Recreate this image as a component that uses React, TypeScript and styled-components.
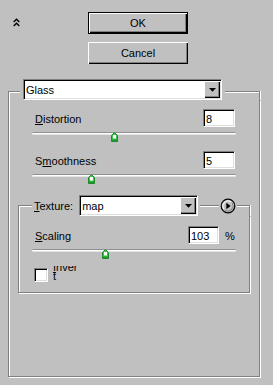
import React from "react";
import styled, { createGlobalStyle, css } from "styled-components";

const GlobalStyle = createGlobalStyle`
  *, *::before, *::after {
    box-sizing: border-box;
  }

  html,
  body {
    margin: 0;
    padding: 0;
    background: #c0c0c0;
  }

  body {
    font-family: "Liberation Sans", Arial, sans-serif;
    font-size: 11px;
    color: #000;
  }
`;

const sunken = css`
  border: 1px solid;
  border-color: #808080 #ffffff #ffffff #808080;
  box-shadow: inset 1px 1px 0 #000, inset -1px -1px 0 #dfdfdf;
  background: #fff;
`;

const raised = css`
  background: #c0c0c0;
  box-shadow: inset 1px 1px 0 #fff, inset -1px -1px 0 #000,
    inset -2px -2px 0 #808080;
`;

const Page = styled.div`
  width: 273px;
  height: 385px;
  padding: 12px 0 0 8px;
`;

const TopBar = styled.div`
  display: grid;
  grid-template-columns: 80px 100px;
  align-items: start;
`;

const CollapseToggle = styled.button`
  appearance: none;
  border: 0;
  background: transparent;
  padding: 0;
  margin: 3px 0 0 5px;
  width: 8px;
  height: 9px;
  display: block;
`;

const ButtonStack = styled.div`
  display: flex;
  flex-direction: column;
  gap: 8px;
`;

const DialogButton = styled.button<{ $primary?: boolean }>`
  appearance: none;
  width: 100px;
  height: 22px;
  padding: 0;
  font: inherit;
  color: #000;
  ${raised};

  ${({ $primary }) =>
    $primary
      ? css`
          border: 1px solid #000;
        `
      : css`
          border: 0;
        `};
`;

/* group box: a head row holding the etched line plus its legend, then a body */
const Group = styled.section<{ $top: number; $width?: number }>`
  margin-top: ${({ $top }) => $top}px;
  width: ${({ $width }) => ($width ? `${$width}px` : "auto")};
`;

const GroupHead = styled.div<{ $height: number }>`
  display: flex;
  height: ${({ $height }) => $height}px;
`;

const Edge = styled.div<{ $line: number; $width?: number; $side?: "left" | "right" }>`
  margin-top: ${({ $line }) => $line}px;
  border-top: 1px solid #808080;

  ${({ $width }) =>
    $width
      ? css`
          width: ${$width}px;
          flex: none;
        `
      : css`
          flex: 1;
        `};

  ${({ $side }) =>
    $side === "left"
      ? css`
          border-left: 1px solid #808080;
          box-shadow: inset 1px 1px 0 #fff;
        `
      : $side === "right"
      ? css`
          border-right: 1px solid #808080;
          box-shadow: inset 0 1px 0 #fff, 1px 0 0 #fff;
        `
      : css`
          box-shadow: inset 0 1px 0 #fff;
        `};
`;

const Legend = styled.div<{ $pad: number }>`
  display: flex;
  align-items: center;
  gap: 6px;
  padding: 0 ${({ $pad }) => $pad}px;
`;

const GroupBody = styled.div<{ $pad: string }>`
  border: 1px solid #808080;
  border-top: 0;
  box-shadow: inset 1px 0 0 #fff, 1px 1px 0 #fff;
  padding: ${({ $pad }) => $pad};
`;

const Controls = styled.div`
  margin: 0 14px;
`;

const Dropdown = styled.div<{ $width: number }>`
  ${sunken};
  width: ${({ $width }) => $width}px;
  height: 21px;
  padding: 1px;
  display: flex;
`;

const DropdownValue = styled.span`
  flex: 1;
  padding: 1px 0 0 1px;
  line-height: 16px;
  white-space: nowrap;
  overflow: hidden;
`;

const DropdownArrow = styled.span`
  flex: none;
  width: 16px;
  display: flex;
  align-items: center;
  justify-content: center;
  ${raised};
`;

const TextLabel = styled.span`
  line-height: 16px;
  white-space: nowrap;
`;

const ControlGroup = styled.div`
  padding-bottom: 9px;
`;

const ControlRow = styled.div`
  display: flex;
  align-items: center;
  height: 18px;
`;

const FieldLabel = styled.label`
  flex: 1;
  padding: 2px 0 0 3px;
  line-height: 16px;
`;

const NumberField = styled.input<{ $width: number }>`
  ${sunken};
  width: ${({ $width }) => $width}px;
  height: 18px;
  padding: 2px 0 0 2px;
  font: inherit;
  color: #000;
  outline: none;
`;

const Unit = styled.span`
  width: 11px;
  margin-left: 6px;
  padding-top: 2px;
  line-height: 16px;
`;

const SliderWrap = styled.div`
  position: relative;
  height: 10px;
  margin-top: 4px;
`;

const Groove = styled.div`
  margin-top: 5px;
  height: 3px;
  border-top: 1px solid #909090;
  border-bottom: 1px solid #e4e4e4;
  border-radius: 2px;
  background: #fff;
`;

const Thumb = styled.svg`
  position: absolute;
  top: 0;
  display: block;
`;

const RoundButton = styled.button`
  appearance: none;
  border: 0;
  background: transparent;
  padding: 0;
  margin: 0 1px;
  width: 16px;
  height: 16px;
  align-self: center;
  flex: none;
`;

const CheckRow = styled.div`
  display: flex;
  align-items: flex-start;
  gap: 5px;
  padding-left: 2px;
`;

const CheckBox = styled.span`
  ${sunken};
  width: 14px;
  height: 14px;
  flex: none;
`;

/* the label box is too short for its text, as in the dialog: the word wraps and the top is cut */
const CheckLabel = styled.label`
  height: 17px;
  margin-top: -2px;
  overflow: hidden;
`;

const CheckText = styled.span`
  display: block;
  width: 25px;
  margin-top: -3px;
  line-height: 9px;
  word-break: break-all;
`;

const ChevronsUp = () => (
  <svg width="8" height="9" viewBox="0 0 8 9">
    <polyline points="0.7,4 3.5,1.2 6.3,4" fill="none" stroke="#000" strokeWidth="1.4" />
    <polyline points="0.7,8 3.5,5.2 6.3,8" fill="none" stroke="#000" strokeWidth="1.4" />
  </svg>
);

const DownTriangle = () => (
  <svg width="7" height="4" viewBox="0 0 7 4">
    <polygon points="0,0 7,0 3.5,3.8" fill="#000" />
  </svg>
);

const PlayCircle = () => (
  <svg width="16" height="16" viewBox="0 0 16 16">
    <circle cx="8" cy="8" r="6.8" fill="#c0c0c0" stroke="#000" strokeWidth="1.2" />
    <path d="M3.6 11 A5.4 5.4 0 0 1 11 3.6" fill="none" stroke="#fff" strokeWidth="1" />
    <path d="M12.4 5 A5.4 5.4 0 0 1 5 12.4" fill="none" stroke="#808080" strokeWidth="1" />
    <polygon points="6.3,4.8 10.6,8 6.3,11.2" fill="#000" />
  </svg>
);

type SliderProps = { value: number; min: number; max: number };

const Slider = ({ value, min, max }: SliderProps) => {
  const pct = (value - min) / (max - min);
  return (
    <SliderWrap>
      <Groove />
      <Thumb
        width="7"
        height="10"
        viewBox="0 0 7 10"
        style={{ left: `calc((100% - 7px) * ${pct})` }}
      >
        <path d="M3.5 0.5 L6.5 3.5 V9.5 H0.5 V3.5 Z" fill="#3fc24e" stroke="#1f8a2c" strokeWidth="1" />
        <rect x="2" y="3" width="3" height="3.5" fill="#fff" />
        <rect x="1" y="7.5" width="5" height="1.5" fill="#1c9a2c" />
      </Thumb>
    </SliderWrap>
  );
};

type ParamProps = {
  label: React.ReactNode;
  value: number;
  min: number;
  max: number;
  fieldWidth?: number;
  unit?: string;
};

const Param = ({ label, value, min, max, fieldWidth = 32, unit }: ParamProps) => (
  <ControlGroup>
    <ControlRow>
      <FieldLabel>{label}</FieldLabel>
      <NumberField $width={fieldWidth} defaultValue={String(value)} />
      {unit && <Unit>{unit}</Unit>}
      {!unit && <span style={{ width: 1 }} />}
    </ControlRow>
    <Slider value={value} min={min} max={max} />
  </ControlGroup>
);

export default function App() {
  return (
    <>
      <GlobalStyle />
      <Page>
        <TopBar>
          <CollapseToggle aria-label="Collapse">
            <ChevronsUp />
          </CollapseToggle>
          <ButtonStack>
            <DialogButton $primary>OK</DialogButton>
            <DialogButton>Cancel</DialogButton>
          </ButtonStack>
        </TopBar>

        <Group $top={15} $width={252}>
          <GroupHead $height={21}>
            <Edge $line={12} $width={12} $side="left" />
            <Legend $pad={3}>
              <Dropdown $width={199}>
                <DropdownValue>Glass</DropdownValue>
                <DropdownArrow>
                  <DownTriangle />
                </DropdownArrow>
              </Dropdown>
            </Legend>
            <Edge $line={12} $side="right" />
          </GroupHead>

          <GroupBody $pad="9px 9px 83px">
            <Controls>
              <Param
                label={
                  <>
                    <u>D</u>istortion
                  </>
                }
                value={8}
                min={0}
                max={20}
              />
              <Param
                label={
                  <>
                    S<u>m</u>oothness
                  </>
                }
                value={5}
                min={1}
                max={15}
              />
            </Controls>

            <Group $top={2}>
              <GroupHead $height={21}>
                <Edge $line={10} $width={14} $side="left" />
                <Legend $pad={2}>
                  <TextLabel>
                    <u>T</u>exture:
                  </TextLabel>
                  <Dropdown $width={119}>
                    <DropdownValue>map</DropdownValue>
                    <DropdownArrow>
                      <DownTriangle />
                    </DropdownArrow>
                  </Dropdown>
                </Legend>
                <Edge $line={10} />
                <RoundButton aria-label="Texture menu">
                  <PlayCircle />
                </RoundButton>
                <Edge $line={10} $width={13} $side="right" />
              </GroupHead>

              <GroupBody $pad="10px 13px 9px">
                <Param
                  label={
                    <>
                      <u>S</u>caling
                    </>
                  }
                  value={103}
                  min={50}
                  max={200}
                  fieldWidth={31}
                  unit="%"
                />
                <CheckRow>
                  <CheckBox />
                  <CheckLabel>
                    <CheckText>
                      <u>I</u>nvert
                    </CheckText>
                  </CheckLabel>
                </CheckRow>
              </GroupBody>
            </Group>
          </GroupBody>
        </Group>
      </Page>
    </>
  );
}
